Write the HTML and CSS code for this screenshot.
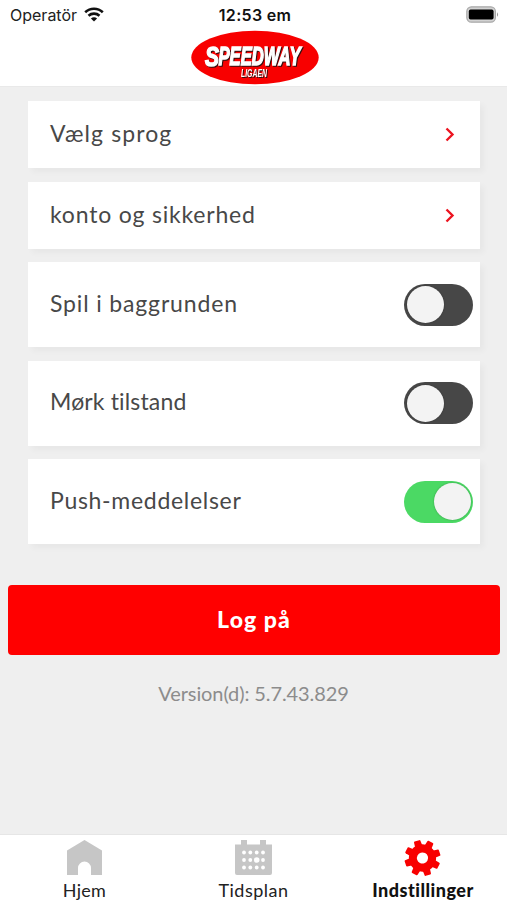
FILE: index.html
```html
<!DOCTYPE html>
<html lang="da">
<head>
<meta charset="utf-8">
<title>Indstillinger</title>
<link rel="stylesheet" href="styles.css">
</head>
<body>
<div class="app">
  <header class="header">
    <div class="status">
      <div class="carrier"><span>Operatör</span>
        <svg class="wifi" width="20" height="15" viewBox="0 0 20 15"><g fill="none" stroke="#111" stroke-width="2.6"><path d="M1.2 5.2C6.2.5 13.8.5 18.8 5.2"/><path d="M4.5 8.7C7.6 5.9 12.4 5.9 15.5 8.7"/></g><path d="M10 14.5L6.9 11.5C8.6 9.9 11.4 9.9 13.1 11.5Z" fill="#111"/></svg>
      </div>
      <div class="clock">12:53 em</div>
      <svg class="battery" width="34" height="18" viewBox="0 0 34 18"><rect x=".8" y=".8" width="28.6" height="15.4" rx="4.6" fill="#d2d2d2" stroke="#a8a8a8" stroke-width="1.2"/><rect x="2.8" y="3.6" width="24.8" height="10" rx="1.8"/><path d="M31 6.2Q33.2 8.5 31 10.8Z" fill="#999"/></svg>
    </div>
    <svg class="logo" width="130" height="55" viewBox="0 0 130 55">
      <ellipse cx="65" cy="27.5" rx="63.7" ry="26.7" fill="#f80000"/>
      <g class="logo-face" transform="translate(0 35.5)">
        <text class="logo-initial" x="15" y="0.5" textLength="14" lengthAdjust="spacingAndGlyphs">S</text>
        <text class="logo-name" x="28.5" y="-0.3" textLength="82" lengthAdjust="spacingAndGlyphs">PEEDWAY</text>
        <text class="logo-sub" x="51" y="11.3" textLength="26" lengthAdjust="spacingAndGlyphs">LIGAEN</text>
      </g>
    </svg>
  </header>
  <main class="content">
    <div class="card"><span class="label-language">Vælg sprog</span><svg class="chevron" width="10" height="15" viewBox="0 0 10 15"><path d="M1.5 1.5L7.5 7.5L1.5 13.5"/></svg></div>
    <div class="card"><span class="label-account">konto og sikkerhed</span><svg class="chevron" width="10" height="15" viewBox="0 0 10 15"><path d="M1.5 1.5L7.5 7.5L1.5 13.5"/></svg></div>
    <div class="card tall"><span class="label-background">Spil i baggrunden</span><div class="toggle"><i></i></div></div>
    <div class="card tall"><span class="label-dark">Mørk tilstand</span><div class="toggle"><i></i></div></div>
    <div class="card tall"><span class="label-push">Push-meddelelser</span><div class="toggle on"><i></i></div></div>
    <button class="login">Log på</button>
    <div class="version">Version(d): 5.7.43.829</div>
  </main>
  <nav class="tabs">
    <div class="tab"><svg width="37" height="36" viewBox="0 0 37 36"><path d="M18.5 0L36 10.5V35H25V28A6.5 6.5 0 0 0 12 28V35H1V10.5Z" fill="#c6c6c6"/></svg><span class="name-home">Hjem</span></div>
    <div class="tab"><svg width="37" height="36" viewBox="0 0 37 36"><path d="M0 4.5H6V0H12V4.5H25V0H31V4.5H37V33Q37 35 35 35H2Q0 35 0 33Z" fill="#c6c6c6"/><g fill="#fff"><circle cx="9" cy="12.5" r="1.9"/><circle cx="15.3" cy="12.5" r="1.9"/><circle cx="21.7" cy="12.5" r="1.9"/><circle cx="28" cy="12.5" r="1.9"/><circle cx="9" cy="20" r="1.9"/><circle cx="15.3" cy="20" r="1.9"/><circle cx="21.7" cy="20" r="2.8"/><circle cx="28" cy="20" r="1.9"/><circle cx="9" cy="27.5" r="1.9"/><circle cx="15.3" cy="27.5" r="1.9"/><circle cx="21.7" cy="27.5" r="1.9"/><circle cx="28" cy="27.5" r="1.9"/></g></svg><span class="name-schedule">Tidsplan</span></div>
    <div class="tab active"><svg width="37" height="36" viewBox="-18.5 -18 37 36"><g transform="rotate(-18)" fill="#f80000"><circle r="9.6" fill="none" stroke="#f80000" stroke-width="8"/><g id="teeth"><path id="tooth" d="M-3.8 -11.5L-3.3 -17.2Q-3.2 -18 -2.4 -18H2.4Q3.2 -18 3.3 -17.2L3.8 -11.5Z"/><use href="#tooth" transform="rotate(45)"/><use href="#tooth" transform="rotate(90)"/><use href="#tooth" transform="rotate(135)"/></g><use href="#teeth" transform="rotate(180)"/></g></svg><span class="name-settings">Indstillinger</span></div>
  </nav>
</div>
</body>
</html>
```
FILE: styles.css
```css
* { box-sizing: border-box; }
body { margin: 0; font-family: Lato, "Open Sans", sans-serif; font-variant-ligatures: none; }
.app { display: flex; flex-direction: column; width: 507px; height: 900px; background: #efefef; overflow: hidden; }
.header { height: 87px; background: #fff; border-bottom: 1px solid #e9e9e9; flex: none; }
.status { display: grid; grid-template-columns: 1fr auto 1fr; align-items: center; height: 30px; padding: 0 7px 0 10px; font: 16px/30px Inter, sans-serif; color: #222; }
.carrier { display: flex; align-items: center; gap: 7px; }
.wifi { margin-top: -2px; }
.clock { font-weight: 600; color: #111; letter-spacing: 0.3px; }
.battery { justify-self: end; margin-top: -1px; }
.logo { display: block; box-sizing: content-box; margin: -0.5px auto 0; padding-left: 2px; overflow: visible; }
.logo-face { fill: #fff; stroke: #fff; filter: drop-shadow(1.3px 1.3px 0.3px #301010); }
.logo-name { font: italic 700 25px "Liberation Sans", sans-serif; stroke-width: 1.5; }
.logo-initial { font: italic 700 28px "Liberation Sans", sans-serif; stroke-width: 1.5; }
.logo-sub { font: italic 700 10.5px "Liberation Sans", sans-serif; stroke-width: 0; }
.content { flex: 1; padding: 13.5px 8px 0; }
.card { display: flex; align-items: center; justify-content: space-between; height: 67.5px; margin: 0 19px 13.5px 20px; padding: 0 25px 0 22px; background: #fff; box-shadow: 4px 4px 6px rgba(0, 0, 0, 0.035); color: #484848; font-size: 23px; line-height: 28px; }
.card span { white-space: nowrap; padding-bottom: 3px; }
.card.tall { position: relative; top: -0.5px; height: 85px; margin-bottom: 13.5px; padding-right: 7px; }
.card.tall span { padding-bottom: 4px; }
.label-language { letter-spacing: 1.1px; }
.label-account { letter-spacing: 0.8px; }
.label-background { letter-spacing: 0.85px; }
.label-dark { letter-spacing: 0.15px; }
.label-push { letter-spacing: 0.7px; }
.chevron { fill: none; stroke: #ec1420; stroke-width: 2.4; }
.toggle { display: flex; align-items: center; width: 69px; height: 42px; padding: 0 2.5px; border-radius: 21px; background: #474747; }
.toggle i { width: 37px; height: 37px; border-radius: 50%; background: #f3f3f3; box-shadow: 0 0 2px rgba(0, 0, 0, 0.3); }
.toggle.on { background: #4bd964; justify-content: flex-end; }
.login { display: block; width: 492px; height: 70px; margin: 40px 0 0; padding: 0 0 2px; border: 0; border-radius: 4px; background: #ff0000; color: #fff; font: 900 23px/68px Lato, sans-serif; letter-spacing: 1.1px; }
.version { margin-top: 25.5px; text-align: center; font-size: 20px; line-height: 26px; letter-spacing: -0.1px; color: #8c8c8c; }
.tabs { display: grid; grid-template-columns: repeat(3, 1fr); height: 66px; background: #fff; border-top: 1px solid #e6e6e6; flex: none; }
.tab { display: flex; flex-direction: column; align-items: center; padding-top: 5px; font-size: 18px; line-height: 26px; color: #222; }
.tab span { margin-top: 1px; }
.name-home { letter-spacing: 0.3px; }
.name-schedule { letter-spacing: 0.5px; }
.tab.active { font-weight: 900; color: #111; }
.tab.active span { letter-spacing: 0.5px; margin-right: -1px; }
```
